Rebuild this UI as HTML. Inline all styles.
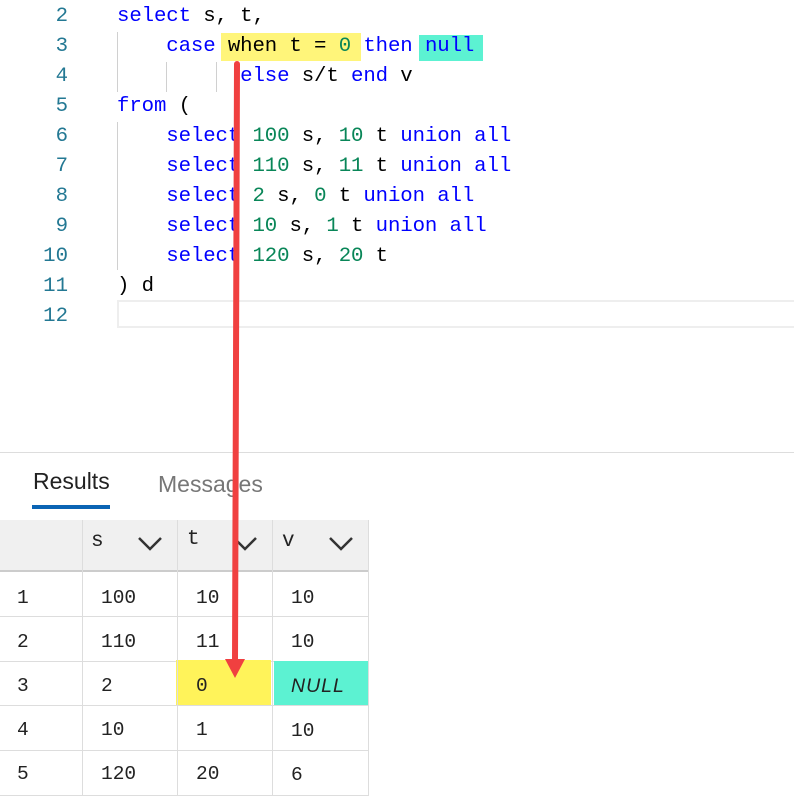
<!DOCTYPE html><html><head><style>
body{margin:0;width:794px;height:803px;background:#fff;position:relative;overflow:hidden;font-family:"Liberation Mono",monospace}
.ln{position:absolute;left:0;width:68px;text-align:right;color:#237893;font-size:20.7px;line-height:30px}
.code{position:absolute;left:117px;font-size:20.7px;line-height:30px;white-space:pre;color:#000;letter-spacing:-0.1px}
.k{color:#0000ff}.n{color:#098658}
.g{position:absolute;width:1px;background:#d0d0d0}
.c{position:absolute;font-size:19.5px;line-height:44px;color:#222}
</style></head><body>
<div class="ln" style="top:2px">2<br>3<br>4<br>5<br>6<br>7<br>8<br>9<br>10<br>11<br>12</div>
<div style="position:absolute;left:221px;top:33px;width:140px;height:28px;background:#fff57a"></div>
<div style="position:absolute;left:419px;top:35px;width:64px;height:26px;background:#5cf2d2"></div>
<div class="g" style="left:117px;top:32px;height:60px"></div>
<div class="g" style="left:166px;top:62px;height:30px"></div>
<div class="g" style="left:216px;top:62px;height:30px"></div>
<div class="g" style="left:117px;top:122px;height:148px"></div>
<div style="position:absolute;left:117px;top:300px;width:677px;height:28px;border:2px solid #eee;border-right:none;box-sizing:border-box"></div>
<div class="code" style="top:2px"><span class="k">select</span> s, t,
    <span class="k">case</span> when t = <span class="n">0</span> <span class="k">then</span> <span class="k">null</span>
          <span class="k">else</span> s/t <span class="k">end</span> v
<span class="k">from</span> (
    <span class="k">select</span> <span class="n">100</span> s, <span class="n">10</span> t <span class="k">union all</span>
    <span class="k">select</span> <span class="n">110</span> s, <span class="n">11</span> t <span class="k">union all</span>
    <span class="k">select</span> <span class="n">2</span> s, <span class="n">0</span> t <span class="k">union all</span>
    <span class="k">select</span> <span class="n">10</span> s, <span class="n">1</span> t <span class="k">union all</span>
    <span class="k">select</span> <span class="n">120</span> s, <span class="n">20</span> t
) d</div>
<div style="position:absolute;left:0;top:452px;width:794px;height:1px;background:#ddd"></div>
<div style="position:absolute;left:33px;top:468px;font:23px 'Liberation Sans',sans-serif;color:#222">Results</div>
<div style="position:absolute;left:32px;top:505px;width:78px;height:4px;background:#0a64b4"></div>
<div style="position:absolute;left:158px;top:471px;font:23px 'Liberation Sans',sans-serif;color:#777">Messages</div>
<div style="position:absolute;left:0;top:520px;width:368px;height:50px;background:#f0f0f0;border-bottom:2px solid #ccc"></div>
<div style="position:absolute;left:0;top:616px;width:368px;height:1px;background:#ddd"></div>
<div style="position:absolute;left:0;top:661px;width:368px;height:1px;background:#ddd"></div>
<div style="position:absolute;left:0;top:705px;width:368px;height:1px;background:#ddd"></div>
<div style="position:absolute;left:0;top:750px;width:368px;height:1px;background:#ddd"></div>
<div style="position:absolute;left:0;top:795px;width:368px;height:1px;background:#ddd"></div>
<div style="position:absolute;left:176px;top:660px;width:95px;height:45px;background:#fff35a"></div>
<div style="position:absolute;left:274px;top:661px;width:94px;height:44px;background:#5cf2d2"></div>
<div style="position:absolute;left:82px;top:520px;width:1px;height:276px;background:#ddd"></div>
<div style="position:absolute;left:177px;top:520px;width:1px;height:276px;background:#ddd"></div>
<div style="position:absolute;left:272px;top:520px;width:1px;height:276px;background:#ddd"></div>
<div style="position:absolute;left:368px;top:520px;width:1px;height:276px;background:#ddd"></div>
<div class="c" style="left:91px;top:520px;font-size:21px">s</div><div class="c" style="left:187px;top:518px;font-size:21px">t</div><div class="c" style="left:282px;top:520px;font-size:21px">v</div>
<svg style="position:absolute;left:0;top:520px" width="370" height="50"><g fill="none" stroke="#333" stroke-width="2.5"><path d="M139 18l11 11 11-11M234 18l11 11 11-11M330 18l11 11 11-11"/></g></svg>
<div class="c" style="left:17px;top:576px">1<br>2<br>3<br>4<br>5</div>
<div class="c" style="left:101px;top:576px">100<br>110<br>2<br>10<br>120</div>
<div class="c" style="left:196px;top:576px">10<br>11<br>0<br>1<br>20</div>
<div class="c" style="left:291px;top:576px">10<br>10<br><i style="font-family:'Liberation Sans',sans-serif;letter-spacing:1px">NULL</i><br>10<br>6</div>
<svg style="position:absolute;left:0;top:0" width="794" height="803"><line x1="237" y1="64" x2="235" y2="662" stroke="#f04040" stroke-width="6" stroke-linecap="round"/><path d="M225 659L245 659L235 678Z" fill="#f04040"/></svg>
</body></html>
